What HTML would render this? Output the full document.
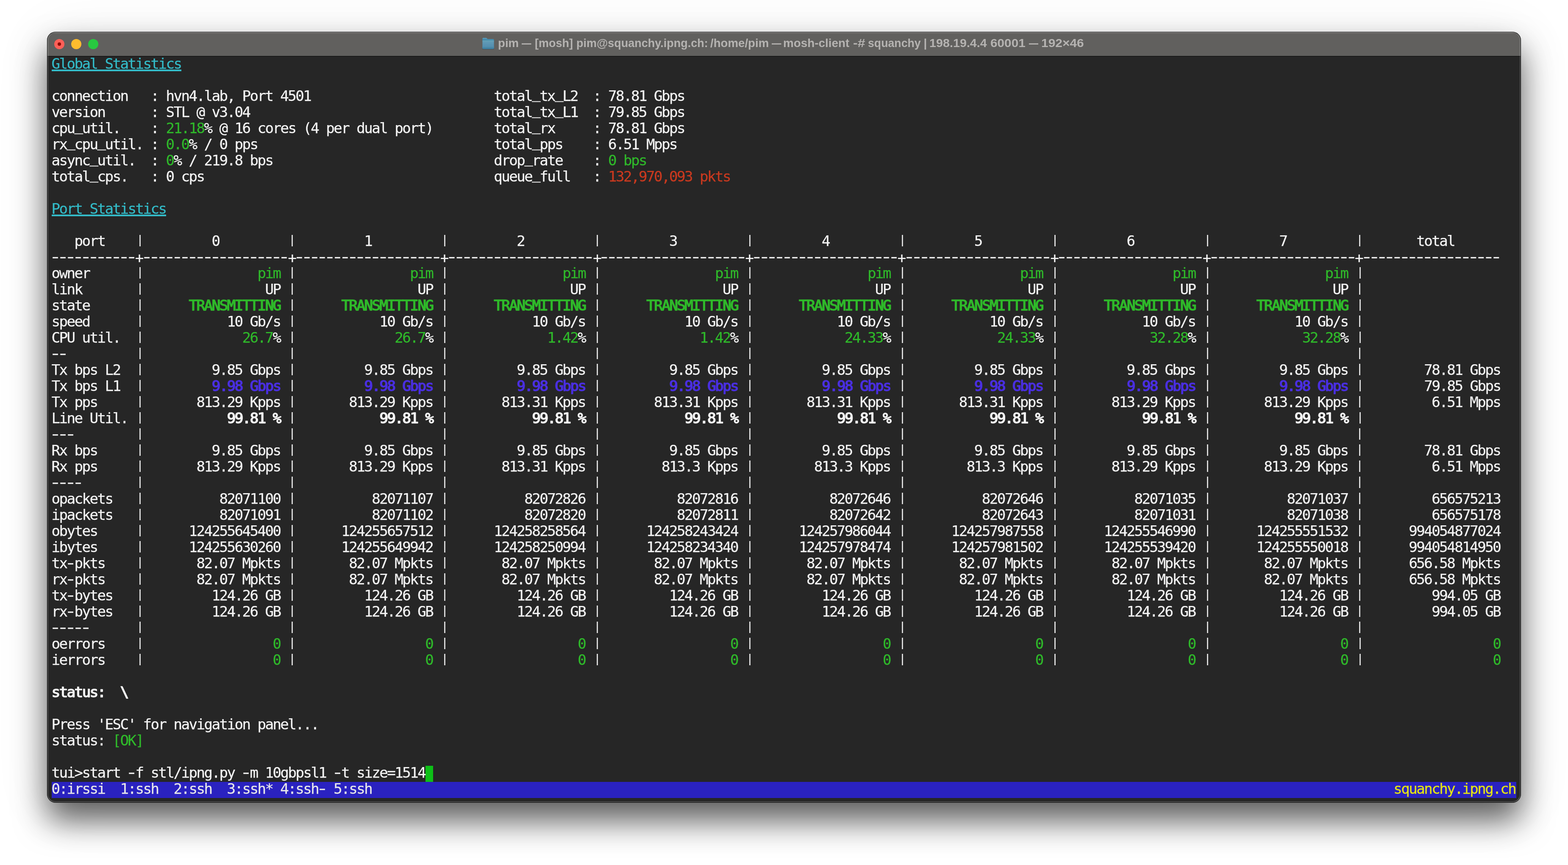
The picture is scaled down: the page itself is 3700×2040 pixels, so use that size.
<!DOCTYPE html>
<html lang="en"><head><meta charset="utf-8"><title>Terminal</title>
<style>
html,body{margin:0;padding:0;background:#fff;}
body{width:3700px;height:2040px;position:relative;overflow:hidden;font-family:"Liberation Sans","DejaVu Sans",sans-serif;}
.win{position:absolute;left:111px;top:75px;width:3478px;height:1818px;border-radius:20px;background:#262626;
 box-shadow:0 42px 74px 0 rgba(0,0,0,.617),0 10px 136px 0 rgba(0,0,0,.079);overflow:hidden;}
.tb{position:absolute;left:0;top:0;width:3478px;height:57px;background:#61605e;border-bottom:1px solid #050505;box-sizing:content-box;}
.tb:before{content:"";position:absolute;left:0;top:1px;width:100%;height:1px;background:#a3a2a0;}
.tb:after{content:"";position:absolute;left:0;top:2px;width:100%;height:1px;background:#737270;}
.edge{position:absolute;left:0;top:0;width:3478px;height:1818px;border-radius:20px;box-sizing:border-box;border:1px solid #000;box-shadow:inset 2px 0 0 rgba(255,255,255,.19),inset -2px 0 0 rgba(255,255,255,.19),inset 0 -2px 0 rgba(255,255,255,.19);pointer-events:none;}
.tl{position:absolute;top:17px;width:24px;height:24px;border-radius:50%;}
.tl.t1{left:17px;background:#fe5f58;}
.tl.t1 i{position:absolute;left:8px;top:8px;width:8px;height:8px;border-radius:50%;background:#8c0b03;}
.tl.t2{left:57px;background:#febc2e;}
.tl.t3{left:97px;background:#28c840;}
.title{position:absolute;left:0;top:7.49px;width:3478px;height:40px;line-height:40px;will-change:transform;color:#b5b3b1;font-weight:700;font-size:28px;}
.title span{position:absolute;top:0;white-space:pre;transform-origin:0 0;}
.folder{position:absolute;left:1027px;top:13.7px;width:28px;height:28px;}
.term{position:absolute;left:0;top:0;width:3700px;height:2040px;font-family:"DejaVu Sans Mono", "Liberation Mono", monospace;font-size:34.2px;letter-spacing:-2.5901px;color:#f4f4f4;
 -webkit-text-stroke:0.25px;font-kerning:none;font-variant-ligatures:none;will-change:transform;}
.r{position:absolute;left:121.6px;height:38px;line-height:38px;white-space:pre;margin-top:-2.840px;}
.g{color:#2fb92a;}
.c{color:#33bbc8;}
.rd{color:#c9391f;}
.u{color:#4a2fe0;}
.y{color:#e5e512;}
.w{color:#e8e8e8;}
.b{-webkit-text-stroke:1.4px;text-shadow:1px 0 0 currentColor;}
.v{display:inline-block;width:18.0px;transform:translateX(0.5px) scale(0.8,0.785);transform-origin:50% 4.04px;}
.s{position:relative;top:-6.5px;}
.h{display:inline-block;width:18.0px;letter-spacing:-7.914px;transform:scaleX(1.42);transform-origin:0 0;position:relative;top:-0.8px;left:-5.619px;}
.d{letter-spacing:-7.914px;transform:scaleX(1.42);transform-origin:0 0;margin-top:-3.640px !important;margin-left:-5.619px;}
.p{display:inline-block;width:12.676px;letter-spacing:0;transform:translate(0.7px,2.5px) scaleX(0.7042);transform-origin:10.295px 50%;}
.ul{position:absolute;height:4px;background:#33bbc8;}
.bar{position:absolute;left:122px;top:1844px;width:3456px;height:38px;background:#2a22c0;}
.cur{position:absolute;left:1004px;top:1806px;width:18px;height:38px;background:#0dbf17;}
</style></head>
<body>
<div class="win">
<div class="tb">
<span class="tl t1"><i></i></span><span class="tl t2"></span><span class="tl t3"></span>
<svg class="folder" viewBox="0 0 28 28"><defs><linearGradient id="fb" x1="0" y1="0" x2="0" y2="1"><stop offset="0" stop-color="#5d9fbc"/><stop offset="1" stop-color="#2f7aa0"/></linearGradient><linearGradient id="ff" x1="0" y1="0" x2="0" y2="1"><stop offset="0" stop-color="#6ba8b9"/><stop offset=".12" stop-color="#619cb6"/><stop offset=".65" stop-color="#558fb0"/><stop offset="1" stop-color="#4a8bab"/></linearGradient></defs><path d="M0.300 25.200V2.200Q0.300 0.200 2.300 0.200H9Q9.900 0.200 10.600 0.900L12.700 3H25.700Q27.700 3 27.700 5V25.200Q27.700 27 25.900 27H2.100Q0.300 27 0.300 25.200Z" fill="#000" opacity=".22" transform="translate(0,.8)"/><path d="M0.300 8V2.200Q0.300 0.200 2.300 0.200H9Q9.900 0.200 10.600 0.900L12.700 3H25.700Q27.700 3 27.700 5V8Z" fill="url(#fb)"/><path d="M0.300 7.300Q0.300 6.300 1.300 6.300H26.700Q27.700 6.300 27.700 7.300V24.600Q27.700 26.400 25.900 26.400H2.100Q0.300 26.400 0.300 24.600Z" fill="url(#ff)"/><rect x="0.300" y="20.200" width="27.400" height=".8" fill="#6aa2b9" opacity=".7"/><rect x="0.300" y="21" width="27.400" height="2.300" fill="#4383a2" opacity=".8"/><rect x="0.300" y="23.300" width="27.400" height=".8" fill="#5d98b3" opacity=".7"/><path d="M0.300 24.100H27.700V24.600Q27.700 26.400 25.900 26.400H2.100Q0.300 26.400 0.300 24.600Z" fill="#3b7fa3"/></svg>
<div class="title"><span style="left:1064.13px;transform:scaleX(0.9870)">pim </span><span style="left:1120.00px;transform:scaleX(0.8036)">— </span><span style="left:1151.14px;transform:scaleX(0.9637)">[mosh] </span><span style="left:1248.57px;transform:scaleX(0.9639)">pim@squanchy.ipng.ch: </span><span style="left:1564.85px;transform:scaleX(0.9873)">/home/pim </span><span style="left:1709.70px;transform:scaleX(0.8036)">— </span><span style="left:1737.21px;transform:scaleX(0.9950)">mosh-client </span><span style="left:1901.66px;transform:scaleX(1.1473)">-# </span><span style="left:1937.18px;transform:scaleX(0.9538)">squanchy </span><span style="left:2068.38px;transform:scaleX(1.0000)">| </span><span style="left:2082.45px;transform:scaleX(1.0262)">198.19.4.4 </span><span style="left:2226.08px;transform:scaleX(1.0625)">60001 </span><span style="left:2317.30px;transform:scaleX(0.7857)">— </span><span style="left:2345.67px;transform:scaleX(1.0687)">192×46</span></div>
</div>
<div class="edge"></div>
</div>
<div class="bar"></div>
<div class="cur"></div>
<div class="ul" style="left:122px;top:164px;width:306px"></div>
<div class="ul" style="left:122px;top:506px;width:270px"></div>
<div class="term">
<div class="r" style="top:134px"><span class="c">Global Statistics</span></div>
<div class="r" style="top:210px">connection   : hvn4.lab, Port 4501                        total<span class="s">_</span>tx<span class="s">_</span>L2  : 78.81 Gbps</div>
<div class="r" style="top:248px">version      : STL @ v3.04                                total<span class="s">_</span>tx<span class="s">_</span>L1  : 79.85 Gbps</div>
<div class="r" style="top:286px">cpu<span class="s">_</span>util.    : <span class="g">21.18</span>% @ 16 cores (4 per dual port)        total<span class="s">_</span>rx     : 78.81 Gbps</div>
<div class="r" style="top:324px">rx<span class="s">_</span>cpu<span class="s">_</span>util. : <span class="g">0.0</span>% / 0 pps                               total<span class="s">_</span>pps    : 6.51 Mpps</div>
<div class="r" style="top:362px">async<span class="s">_</span>util.  : <span class="g">0</span>% / 219.8 bps                             drop<span class="s">_</span>rate    : <span class="g">0 bps</span></div>
<div class="r" style="top:400px">total<span class="s">_</span>cps.   : 0 cps                                      queue<span class="s">_</span>full   : <span class="rd">132,970,093 pkts</span></div>
<div class="r" style="top:476px"><span class="c">Port Statistics</span></div>
<div class="r" style="top:552px">   port    <span class="v">|</span>         0         <span class="v">|</span>         1         <span class="v">|</span>         2         <span class="v">|</span>         3         <span class="v">|</span>         4         <span class="v">|</span>         5         <span class="v">|</span>         6         <span class="v">|</span>         7         <span class="v">|</span>       total</div>
<div class="r d" style="top:590px">-----------<span class="p">+</span>-------------------<span class="p">+</span>-------------------<span class="p">+</span>-------------------<span class="p">+</span>-------------------<span class="p">+</span>-------------------<span class="p">+</span>-------------------<span class="p">+</span>-------------------<span class="p">+</span>-------------------<span class="p">+</span>------------------</div>
<div class="r" style="top:628px">owner      <span class="v">|</span>               <span class="g">pim</span> <span class="v">|</span>               <span class="g">pim</span> <span class="v">|</span>               <span class="g">pim</span> <span class="v">|</span>               <span class="g">pim</span> <span class="v">|</span>               <span class="g">pim</span> <span class="v">|</span>               <span class="g">pim</span> <span class="v">|</span>               <span class="g">pim</span> <span class="v">|</span>               <span class="g">pim</span> <span class="v">|</span></div>
<div class="r" style="top:666px">link       <span class="v">|</span>                UP <span class="v">|</span>                UP <span class="v">|</span>                UP <span class="v">|</span>                UP <span class="v">|</span>                UP <span class="v">|</span>                UP <span class="v">|</span>                UP <span class="v">|</span>                UP <span class="v">|</span></div>
<div class="r" style="top:704px">state      <span class="v">|</span>      <span class="g b">TRANSMITTING</span> <span class="v">|</span>      <span class="g b">TRANSMITTING</span> <span class="v">|</span>      <span class="g b">TRANSMITTING</span> <span class="v">|</span>      <span class="g b">TRANSMITTING</span> <span class="v">|</span>      <span class="g b">TRANSMITTING</span> <span class="v">|</span>      <span class="g b">TRANSMITTING</span> <span class="v">|</span>      <span class="g b">TRANSMITTING</span> <span class="v">|</span>      <span class="g b">TRANSMITTING</span> <span class="v">|</span></div>
<div class="r" style="top:742px">speed      <span class="v">|</span>           10 Gb/s <span class="v">|</span>           10 Gb/s <span class="v">|</span>           10 Gb/s <span class="v">|</span>           10 Gb/s <span class="v">|</span>           10 Gb/s <span class="v">|</span>           10 Gb/s <span class="v">|</span>           10 Gb/s <span class="v">|</span>           10 Gb/s <span class="v">|</span></div>
<div class="r" style="top:780px">CPU util.  <span class="v">|</span>             <span class="g">26.7</span>% <span class="v">|</span>             <span class="g">26.7</span>% <span class="v">|</span>             <span class="g">1.42</span>% <span class="v">|</span>             <span class="g">1.42</span>% <span class="v">|</span>            <span class="g">24.33</span>% <span class="v">|</span>            <span class="g">24.33</span>% <span class="v">|</span>            <span class="g">32.28</span>% <span class="v">|</span>            <span class="g">32.28</span>% <span class="v">|</span></div>
<div class="r" style="top:818px"><span class="h" style="width:36px">--</span>         <span class="v">|</span>                   <span class="v">|</span>                   <span class="v">|</span>                   <span class="v">|</span>                   <span class="v">|</span>                   <span class="v">|</span>                   <span class="v">|</span>                   <span class="v">|</span>                   <span class="v">|</span></div>
<div class="r" style="top:856px">Tx bps L2  <span class="v">|</span>         9.85 Gbps <span class="v">|</span>         9.85 Gbps <span class="v">|</span>         9.85 Gbps <span class="v">|</span>         9.85 Gbps <span class="v">|</span>         9.85 Gbps <span class="v">|</span>         9.85 Gbps <span class="v">|</span>         9.85 Gbps <span class="v">|</span>         9.85 Gbps <span class="v">|</span>        78.81 Gbps</div>
<div class="r" style="top:894px">Tx bps L1  <span class="v">|</span>         <span class="u b">9.98 Gbps</span> <span class="v">|</span>         <span class="u b">9.98 Gbps</span> <span class="v">|</span>         <span class="u b">9.98 Gbps</span> <span class="v">|</span>         <span class="u b">9.98 Gbps</span> <span class="v">|</span>         <span class="u b">9.98 Gbps</span> <span class="v">|</span>         <span class="u b">9.98 Gbps</span> <span class="v">|</span>         <span class="u b">9.98 Gbps</span> <span class="v">|</span>         <span class="u b">9.98 Gbps</span> <span class="v">|</span>        79.85 Gbps</div>
<div class="r" style="top:932px">Tx pps     <span class="v">|</span>       813.29 Kpps <span class="v">|</span>       813.29 Kpps <span class="v">|</span>       813.31 Kpps <span class="v">|</span>       813.31 Kpps <span class="v">|</span>       813.31 Kpps <span class="v">|</span>       813.31 Kpps <span class="v">|</span>       813.29 Kpps <span class="v">|</span>       813.29 Kpps <span class="v">|</span>         6.51 Mpps</div>
<div class="r" style="top:970px">Line Util. <span class="v">|</span>           <span class="b">99.81 %</span> <span class="v">|</span>           <span class="b">99.81 %</span> <span class="v">|</span>           <span class="b">99.81 %</span> <span class="v">|</span>           <span class="b">99.81 %</span> <span class="v">|</span>           <span class="b">99.81 %</span> <span class="v">|</span>           <span class="b">99.81 %</span> <span class="v">|</span>           <span class="b">99.81 %</span> <span class="v">|</span>           <span class="b">99.81 %</span> <span class="v">|</span></div>
<div class="r" style="top:1008px"><span class="h" style="width:54px">---</span>        <span class="v">|</span>                   <span class="v">|</span>                   <span class="v">|</span>                   <span class="v">|</span>                   <span class="v">|</span>                   <span class="v">|</span>                   <span class="v">|</span>                   <span class="v">|</span>                   <span class="v">|</span></div>
<div class="r" style="top:1046px">Rx bps     <span class="v">|</span>         9.85 Gbps <span class="v">|</span>         9.85 Gbps <span class="v">|</span>         9.85 Gbps <span class="v">|</span>         9.85 Gbps <span class="v">|</span>         9.85 Gbps <span class="v">|</span>         9.85 Gbps <span class="v">|</span>         9.85 Gbps <span class="v">|</span>         9.85 Gbps <span class="v">|</span>        78.81 Gbps</div>
<div class="r" style="top:1084px">Rx pps     <span class="v">|</span>       813.29 Kpps <span class="v">|</span>       813.29 Kpps <span class="v">|</span>       813.31 Kpps <span class="v">|</span>        813.3 Kpps <span class="v">|</span>        813.3 Kpps <span class="v">|</span>        813.3 Kpps <span class="v">|</span>       813.29 Kpps <span class="v">|</span>       813.29 Kpps <span class="v">|</span>         6.51 Mpps</div>
<div class="r" style="top:1122px"><span class="h" style="width:72px">----</span>       <span class="v">|</span>                   <span class="v">|</span>                   <span class="v">|</span>                   <span class="v">|</span>                   <span class="v">|</span>                   <span class="v">|</span>                   <span class="v">|</span>                   <span class="v">|</span>                   <span class="v">|</span></div>
<div class="r" style="top:1160px">opackets   <span class="v">|</span>          82071100 <span class="v">|</span>          82071107 <span class="v">|</span>          82072826 <span class="v">|</span>          82072816 <span class="v">|</span>          82072646 <span class="v">|</span>          82072646 <span class="v">|</span>          82071035 <span class="v">|</span>          82071037 <span class="v">|</span>         656575213</div>
<div class="r" style="top:1198px">ipackets   <span class="v">|</span>          82071091 <span class="v">|</span>          82071102 <span class="v">|</span>          82072820 <span class="v">|</span>          82072811 <span class="v">|</span>          82072642 <span class="v">|</span>          82072643 <span class="v">|</span>          82071031 <span class="v">|</span>          82071038 <span class="v">|</span>         656575178</div>
<div class="r" style="top:1236px">obytes     <span class="v">|</span>      124255645400 <span class="v">|</span>      124255657512 <span class="v">|</span>      124258258564 <span class="v">|</span>      124258243424 <span class="v">|</span>      124257986044 <span class="v">|</span>      124257987558 <span class="v">|</span>      124255546990 <span class="v">|</span>      124255551532 <span class="v">|</span>      994054877024</div>
<div class="r" style="top:1274px">ibytes     <span class="v">|</span>      124255630260 <span class="v">|</span>      124255649942 <span class="v">|</span>      124258250994 <span class="v">|</span>      124258234340 <span class="v">|</span>      124257978474 <span class="v">|</span>      124257981502 <span class="v">|</span>      124255539420 <span class="v">|</span>      124255550018 <span class="v">|</span>      994054814950</div>
<div class="r" style="top:1312px">tx<span class="h">-</span>pkts    <span class="v">|</span>       82.07 Mpkts <span class="v">|</span>       82.07 Mpkts <span class="v">|</span>       82.07 Mpkts <span class="v">|</span>       82.07 Mpkts <span class="v">|</span>       82.07 Mpkts <span class="v">|</span>       82.07 Mpkts <span class="v">|</span>       82.07 Mpkts <span class="v">|</span>       82.07 Mpkts <span class="v">|</span>      656.58 Mpkts</div>
<div class="r" style="top:1350px">rx<span class="h">-</span>pkts    <span class="v">|</span>       82.07 Mpkts <span class="v">|</span>       82.07 Mpkts <span class="v">|</span>       82.07 Mpkts <span class="v">|</span>       82.07 Mpkts <span class="v">|</span>       82.07 Mpkts <span class="v">|</span>       82.07 Mpkts <span class="v">|</span>       82.07 Mpkts <span class="v">|</span>       82.07 Mpkts <span class="v">|</span>      656.58 Mpkts</div>
<div class="r" style="top:1388px">tx<span class="h">-</span>bytes   <span class="v">|</span>         124.26 GB <span class="v">|</span>         124.26 GB <span class="v">|</span>         124.26 GB <span class="v">|</span>         124.26 GB <span class="v">|</span>         124.26 GB <span class="v">|</span>         124.26 GB <span class="v">|</span>         124.26 GB <span class="v">|</span>         124.26 GB <span class="v">|</span>         994.05 GB</div>
<div class="r" style="top:1426px">rx<span class="h">-</span>bytes   <span class="v">|</span>         124.26 GB <span class="v">|</span>         124.26 GB <span class="v">|</span>         124.26 GB <span class="v">|</span>         124.26 GB <span class="v">|</span>         124.26 GB <span class="v">|</span>         124.26 GB <span class="v">|</span>         124.26 GB <span class="v">|</span>         124.26 GB <span class="v">|</span>         994.05 GB</div>
<div class="r" style="top:1464px"><span class="h" style="width:90px">-----</span>      <span class="v">|</span>                   <span class="v">|</span>                   <span class="v">|</span>                   <span class="v">|</span>                   <span class="v">|</span>                   <span class="v">|</span>                   <span class="v">|</span>                   <span class="v">|</span>                   <span class="v">|</span></div>
<div class="r" style="top:1502px">oerrors    <span class="v">|</span>                 <span class="g">0</span> <span class="v">|</span>                 <span class="g">0</span> <span class="v">|</span>                 <span class="g">0</span> <span class="v">|</span>                 <span class="g">0</span> <span class="v">|</span>                 <span class="g">0</span> <span class="v">|</span>                 <span class="g">0</span> <span class="v">|</span>                 <span class="g">0</span> <span class="v">|</span>                 <span class="g">0</span> <span class="v">|</span>                 <span class="g">0</span></div>
<div class="r" style="top:1540px">ierrors    <span class="v">|</span>                 <span class="g">0</span> <span class="v">|</span>                 <span class="g">0</span> <span class="v">|</span>                 <span class="g">0</span> <span class="v">|</span>                 <span class="g">0</span> <span class="v">|</span>                 <span class="g">0</span> <span class="v">|</span>                 <span class="g">0</span> <span class="v">|</span>                 <span class="g">0</span> <span class="v">|</span>                 <span class="g">0</span> <span class="v">|</span>                 <span class="g">0</span></div>
<div class="r" style="top:1616px"><span class="b">status:</span>  <span class="b">\</span></div>
<div class="r" style="top:1692px">Press 'ESC' for navigation panel...</div>
<div class="r" style="top:1730px">status: <span class="g">[OK]</span></div>
<div class="r" style="top:1806px">tui&gt;start <span class="h">-</span>f stl/ipng.py <span class="h">-</span>m 10gbpsl1 <span class="h">-</span>t size=1514</div>
<div class="r" style="top:1844px"><span class="w">0:irssi  1:ssh  2:ssh  3:ssh* 4:ssh<span class="h">-</span> 5:ssh</span>                                                                                                                                      <span class="y">squanchy.ipng.ch</span></div>
</div>
</body></html>
